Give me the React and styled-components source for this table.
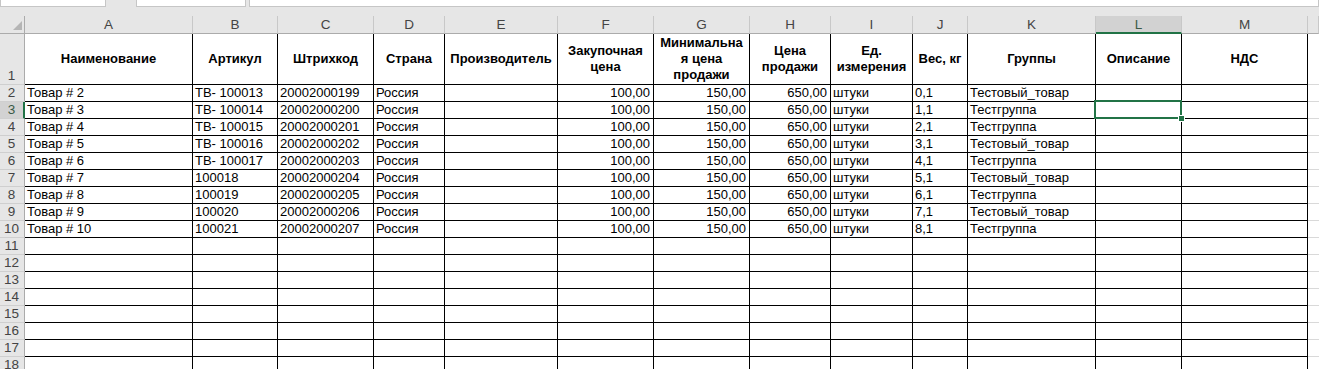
import React from "react";
import styled, { createGlobalStyle, css } from "styled-components";

const GlobalStyle = createGlobalStyle`
  html, body {
    margin: 0;
    padding: 0;
    background: #fff;
    overflow: hidden;
  }
  body {
    font-family: "Liberation Sans", Arial, sans-serif;
  }
`;

const GREEN = "#217346";

const Window = styled.div`
  width: 1319px;
  height: 369px;
  overflow: hidden;
  background: #fff;
`;

// bottom edge of the formula bar
const FormulaStrip = styled.div`
  height: 16px;
  background: #e6e6e6;
  display: flex;
  align-items: flex-start;
`;

const FieldBox = styled.div`
  box-sizing: border-box;
  height: 7px;
  width: ${(p) => (p.$w ? `${p.$w}px` : "auto")};
  flex: ${(p) => (p.$w ? "none" : 1)};
  margin-left: ${(p) => p.$gap || 0}px;
  background: #fff;
  border: 1px solid #c6c6c6;
  border-top: none;
`;

const Sheet = styled.div`
  display: grid;
  grid-template-columns: 25px 168px 85px 96px 71px 113px 96px 96px 81px 82px 55px 128px 86px 126px 1fr;
  grid-template-rows: 18px 51px repeat(17, 17px);
  font-size: 13px;
  color: #000;
`;

const Corner = styled.div`
  position: relative;
  box-sizing: border-box;
  background: #e6e6e6;
  border-right: 1px solid #ababab;
  border-bottom: 1px solid #ababab;

  &::after {
    content: "";
    position: absolute;
    right: 2px;
    bottom: 3px;
    width: 0;
    height: 0;
    border-left: 9px solid transparent;
    border-bottom: 9px solid #b5b5b5;
  }
`;

const ColHead = styled.div`
  box-sizing: border-box;
  display: flex;
  align-items: center;
  justify-content: center;
  padding-top: 1px;
  font-size: 13.5px;
  background: ${(p) => (p.$active ? "#d2d2d2" : "#e6e6e6")};
  color: ${(p) => (p.$active ? "#3a5a46" : "#444")};
  border-right: 1px solid #c8c8c8;
  border-bottom: ${(p) => (p.$active ? `2px solid ${GREEN}` : "1px solid #ababab")};
  line-height: 16px;
`;

const RowHead = styled.div`
  box-sizing: border-box;
  display: flex;
  align-items: flex-end;
  justify-content: center;
  font-size: 13.5px;
  background: ${(p) => (p.$active ? "#d2d2d2" : "#e6e6e6")};
  color: ${(p) => (p.$active ? "#3a5a46" : "#444")};
  border-right: ${(p) => (p.$active ? `2px solid ${GREEN}` : "1px solid #ababab")};
  border-bottom: 1px solid #cfcfcf;
  line-height: 16px;
  padding-right: ${(p) => (p.$active ? 0 : 1)}px;
`;

const Cell = styled.div`
  position: relative;
  box-sizing: border-box;
  display: flex;
  align-items: flex-end;
  justify-content: ${(p) => (p.$right ? "flex-end" : "flex-start")};
  padding: 0 3px 0 2px;
  white-space: nowrap;
  line-height: 16px;
  border-right: 1px solid #000;
  border-bottom: 1px solid #000;

  ${(p) =>
    p.$active &&
    css`
      &::before {
        content: "";
        position: absolute;
        top: -2px;
        left: -2px;
        right: -1px;
        bottom: -1px;
        border: 2px solid ${GREEN};
        z-index: 1;
      }
      &::after {
        content: "";
        position: absolute;
        right: -4px;
        bottom: -4px;
        width: 5px;
        height: 5px;
        background: ${GREEN};
        border: 1px solid #fff;
        z-index: 2;
      }
    `}
`;

const HeadCell = styled(Cell)`
  align-items: center;
  justify-content: center;
  text-align: center;
  font-weight: bold;
  white-space: normal;
  padding: 0 2px;
`;

// column N, past the bordered range
const SpareCell = styled.div`
  box-sizing: border-box;
  border-bottom: 1px solid #d9d9d9;
`;

const LETTERS = ["A", "B", "C", "D", "E", "F", "G", "H", "I", "J", "K", "L", "M", ""];

const HEADERS = [
  ["Наименование"],
  ["Артикул"],
  ["Штрихкод"],
  ["Страна"],
  ["Производитель"],
  ["Закупочная", "цена"],
  ["Минимальна", "я цена", "продажи"],
  ["Цена", "продажи"],
  ["Ед.", "измерения"],
  ["Вес, кг"],
  ["Группы"],
  ["Описание"],
  ["НДС"],
];

const RIGHT_COLS = [5, 6, 7];

const items = [
  ["Товар # 2", "ТВ- 100013", "20002000199", "0,1", "Тестовый_товар"],
  ["Товар # 3", "ТВ- 100014", "20002000200", "1,1", "Тестгруппа"],
  ["Товар # 4", "ТВ- 100015", "20002000201", "2,1", "Тестгруппа"],
  ["Товар # 5", "ТВ- 100016", "20002000202", "3,1", "Тестовый_товар"],
  ["Товар # 6", "ТВ- 100017", "20002000203", "4,1", "Тестгруппа"],
  ["Товар # 7", "100018", "20002000204", "5,1", "Тестовый_товар"],
  ["Товар # 8", "100019", "20002000205", "6,1", "Тестгруппа"],
  ["Товар # 9", "100020", "20002000206", "7,1", "Тестовый_товар"],
  ["Товар # 10", "100021", "20002000207", "8,1", "Тестгруппа"],
];

const rows = [
  ...items.map(([name, sku, code, weight, group]) => [
    name, sku, code, "Россия", "", "100,00", "150,00", "650,00", "штуки", weight, group, "", "",
  ]),
  ...Array.from({ length: 8 }, () => Array(13).fill("")),
];

export default function App() {
  return (
    <Window>
      <GlobalStyle />
      <FormulaStrip>
        <FieldBox $w={106} />
        <FieldBox $w={110} $gap={30} />
        <FieldBox $gap={3} />
      </FormulaStrip>

      <Sheet>
        <Corner />
        {LETTERS.map((l, i) => (
          <ColHead key={i} $active={l === "L"}>
            {l}
          </ColHead>
        ))}

        <RowHead>1</RowHead>
        {HEADERS.map((lines, i) => (
          <HeadCell key={i}>
            <span>
              {lines.map((t, j) => (
                <React.Fragment key={j}>
                  {j > 0 && <br />}
                  {t}
                </React.Fragment>
              ))}
            </span>
          </HeadCell>
        ))}
        <SpareCell />

        {rows.map((row, r) => {
          const num = r + 2;
          return (
            <React.Fragment key={num}>
              <RowHead $active={num === 3}>{num}</RowHead>
              {row.map((v, c) => (
                <Cell key={c} $right={RIGHT_COLS.includes(c)} $active={num === 3 && c === 11}>
                  {v}
                </Cell>
              ))}
              <SpareCell />
            </React.Fragment>
          );
        })}
      </Sheet>
    </Window>
  );
}
